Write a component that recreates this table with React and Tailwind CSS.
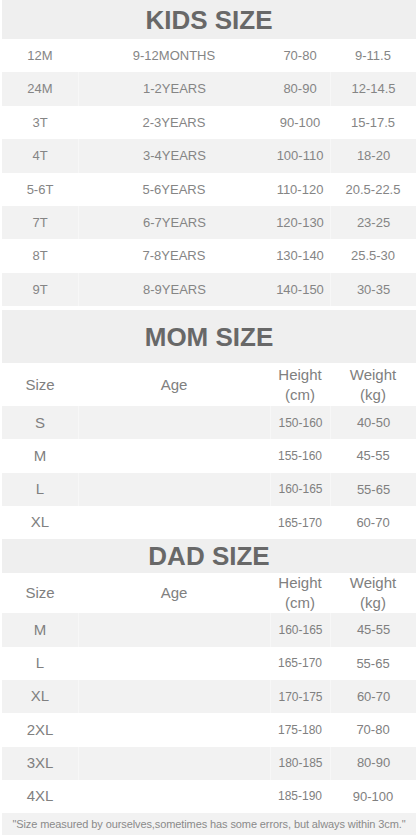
const kids = [
  ["12M", "9-12MONTHS", "70-80", "9-11.5"],
  ["24M", "1-2YEARS", "80-90", "12-14.5"],
  ["3T", "2-3YEARS", "90-100", "15-17.5"],
  ["4T", "3-4YEARS", "100-110", "18-20"],
  ["5-6T", "5-6YEARS", "110-120", "20.5-22.5"],
  ["7T", "6-7YEARS", "120-130", "23-25"],
  ["8T", "7-8YEARS", "130-140", "25.5-30"],
  ["9T", "8-9YEARS", "140-150", "30-35"],
];

const mom = [
  ["S", "150-160", "40-50"],
  ["M", "155-160", "45-55"],
  ["L", "160-165", "55-65"],
  ["XL", "165-170", "60-70"],
];

const dad = [
  ["M", "160-165", "45-55"],
  ["L", "165-170", "55-65"],
  ["XL", "170-175", "60-70"],
  ["2XL", "175-180", "70-80"],
  ["3XL", "180-185", "80-90"],
  ["4XL", "185-190", "90-100"],
];

const cols = "grid grid-cols-[76px_192px_60px_1fr] items-center";

function Title({ text, h }) {
  return (
    <div className={`${h} bg-[#efefef] flex items-center justify-center`}>
      <span className="text-[26px] font-bold text-[#686868] leading-none">{text}</span>
    </div>
  );
}

function Header({ h }) {
  return (
    <div className={`${cols} ${h} bg-white text-[15px] text-[#808080] leading-[20px] text-center`}>
      <div>Size</div>
      <div>Age</div>
      <div>
        Height
        <br />
        (cm)
      </div>
      <div>
        Weight
        <br />
        (kg)
      </div>
    </div>
  );
}

function AdultRows({ rows, grayFirst }) {
  return rows.map((r, i) => {
    const gray = grayFirst ? i % 2 === 0 : i % 2 === 1;
    return (
      <div
        key={r[0]}
        className={`${cols} h-[33.3px] text-center text-[#808080] ${gray ? "bg-[#f2f2f2]" : "bg-white"}`}
      >
        <div className="text-[15px]">{r[0]}</div>
        <div className={`h-full ${gray ? "border-l border-[#f7f7f7]" : ""}`} />
        <div className={`text-[12px] h-full flex items-center justify-center ${gray ? "border-l border-[#f7f7f7]" : ""}`}>{r[1]}</div>
        <div className={`text-[13px] h-full flex items-center justify-center ${gray ? "border-l border-[#f7f7f7]" : ""}`}>{r[2]}</div>
      </div>
    );
  });
}

export default function App() {
  return (
    <div className="w-[416px] h-[835px] bg-white pl-[2px] overflow-hidden font-['Liberation_Sans',Arial,sans-serif]">
      <Title text="KIDS SIZE" h="h-[39px]" />
      {kids.map((r, i) => (
        <div
          key={r[0]}
          className={`${cols} h-[33.4px] text-[13px] text-[#858585] text-center ${i % 2 ? "bg-[#f2f2f2]" : "bg-white"}`}
        >
          <div>{r[0]}</div>
          <div className={`h-full flex items-center justify-center ${i % 2 ? "border-l border-[#f7f7f7]" : ""}`}>{r[1]}</div>
          <div className="h-full flex items-center justify-center">{r[2]}</div>
          <div className={`h-full flex items-center justify-center ${i % 2 ? "border-l border-[#f7f7f7]" : ""}`}>{r[3]}</div>
        </div>
      ))}
      <div className="h-[4px] bg-white" />
      <Title text="MOM SIZE" h="h-[53px]" />
      <Header h="h-[43px]" />
      <AdultRows rows={mom} grayFirst />
      <Title text="DAD SIZE" h="h-[34px]" />
      <Header h="h-[40px]" />
      <AdultRows rows={dad} grayFirst />
      <div className="h-[23px] bg-[#f2f2f2] flex items-center justify-center text-[11px] text-[#8a8a8a] whitespace-nowrap tracking-[-0.1px]">
        "Size measured by ourselves,sometimes has some errors, but always within 3cm."
      </div>
    </div>
  );
}
